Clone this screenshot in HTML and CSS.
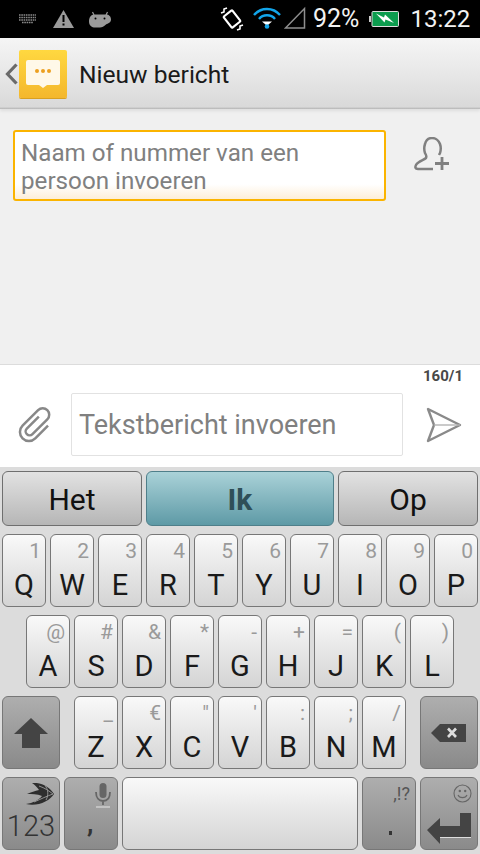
FILE: index.html
```html
<!DOCTYPE html>
<html lang="nl">
<head>
  <meta charset="UTF-8" />
  <meta name="viewport" content="width=device-width, initial-scale=1.0"/>
  <title>Nieuw bericht</title>
  <link rel="stylesheet" href="styles.css">
</head>
<body>
  <div class="statusbar">
    <svg class="st-kbd" width="19" height="10" viewBox="0 0 19 10"><path d="M1 1h17M1 3.500h17M1 6h17M4 8.500h11" stroke="#8a8a8a" stroke-width="1.600" stroke-dasharray="1.600 .7"/></svg>
    <svg class="st-warn" width="21" height="18" viewBox="0 0 21 18"><path d="M10.500 0L21 18H0Z" fill="#9a9a9a"/><path d="M9.500 5h2v7h-2zM9.500 13.500h2v2h-2z" fill="#000"/></svg>
    <svg class="st-droid" width="22" height="17" viewBox="0 0 22 17"><path d="M5 4L3.500 1M17 4l1.500-3" stroke="#9a9a9a" stroke-width="1.200"/><path d="M5 3.500h12c3 0 5 2 5 5s-3 4-5 5c-2 2-4 3-6 3H6c-3 0-6-2-6-6 0-4 2-7 5-7Z" fill="#9a9a9a"/><circle cx="6.500" cy="7.500" r="1" fill="#000"/><circle cx="15.500" cy="7.500" r="1" fill="#000"/></svg>
    <svg class="st-rot" width="24" height="24" viewBox="0 0 24 24"><g fill="none" stroke="#fff"><rect x="6.500" y="5" width="11" height="14" rx="1" transform="rotate(-38 12 12)" stroke-width="2.200"/><path d="M1 6l3-1 0-3 3-1M23 18l-3 1 0 3-3 1" stroke-width="1.600"/></g></svg>
    <svg class="st-wifi" width="28" height="23" viewBox="0 0 28 23"><g fill="none" stroke="#12a5ea" stroke-width="2.400"><path d="M1 9C8 1 20 1 27 9"/><path d="M6 13C10 8 18 8 22 13"/></g><path d="M9 15.500h10l-4 3.500h-2z" fill="#fff"/><circle cx="14" cy="20.500" r="2.300" fill="#12a5ea"/></svg>
    <svg class="st-signal" width="22" height="23" viewBox="0 0 22 23"><path d="M20.500 2.500V22H1.500Z" fill="none" stroke="#8e8e8e" stroke-width="1.500"/></svg>
    <span class="st-text st-pct">92%</span>
    <svg class="st-batt" width="30" height="16" viewBox="0 0 30 16"><rect x="0" y="5" width="2" height="6" fill="#ccc"/><rect x="3" y="0.500" width="26.500" height="15" rx="1" fill="#0c9c4e" stroke="#ddd"/><path d="M7 2.500l8 4 1-3 9 8.500-8.500-3.500-1 3Z" fill="#fff"/></svg>
    <span class="st-text st-time">13:22</span>
  </div>

  <div class="actionbar">
    <svg class="back" width="13" height="22" viewBox="0 0 13 22"><path d="M11.500 1.500L2.500 11l9 9.500" fill="none" stroke="#6a6a6a" stroke-width="3.200"/></svg>
    <div class="app-icon">
      <svg width="34" height="28" viewBox="0 0 34 28"><path d="M2 0h30a2 2 0 0 1 2 2v21a2 2 0 0 1-2 2H21l-4 3-4-3H2a2 2 0 0 1-2-2V2a2 2 0 0 1 2-2Z" fill="#fff8e8"/><circle cx="11" cy="11" r="2" fill="#eca020"/><circle cx="17" cy="11" r="2" fill="#eca020"/><circle cx="23" cy="11" r="2" fill="#eca020"/></svg>
    </div>
    <span class="title">Nieuw bericht</span>
  </div>

  <div class="recipient">
    <div class="to-field">Naam of nummer van een persoon invoeren</div>
    <svg class="add-person" width="36" height="34" viewBox="0 0 36 34"><path d="M19 32H4c-3 0-3-2-2-4 2-4 8-5 10-7 1-2 0-3-1-5-1-3-1-6 0-9 1-4 4-6 7-6 4 0 7 3 8 6 1 3 1 6 0 9l-1 2" fill="none" stroke="#808080" stroke-width="2.500"/><path d="M28 20v13M21 26.500h14" stroke="#808080" stroke-width="2.800"/></svg>
  </div>

  <div class="compose">
    <div class="counter">160/1</div>
    <div class="compose-row">
      <svg class="clip" width="38" height="38" viewBox="0 0 38 38"><path d="M15 11V28a4 4 0 0 0 8 0V7a6.500 6.500 0 0 0-13 0V29a9 9 0 0 0 18 0V11" transform="rotate(45 19 19)" fill="none" stroke="#888" stroke-width="2.500"/></svg>
      <div class="msg-field">Tekstbericht invoeren</div>
      <svg class="send" width="36" height="36" viewBox="0 0 36 36"><path d="M2 2L34 18 2 34 8 18Z" fill="none" stroke="#8a8a8a" stroke-width="2.400" stroke-linejoin="round"/><path d="M8 18H34" stroke="#b4b4b4" stroke-width="1.400"/></svg>
    </div>
  </div>

  <div class="keyboard">
    <div class="row suggestions">
      <div class="sug">Het</div>
      <div class="sug sug-main">Ik</div>
      <div class="sug">Op</div>
    </div>
    <div class="row">
      <div class="key"><span class="hint">1</span><span class="main">Q</span></div>
      <div class="key"><span class="hint">2</span><span class="main">W</span></div>
      <div class="key"><span class="hint">3</span><span class="main">E</span></div>
      <div class="key"><span class="hint">4</span><span class="main">R</span></div>
      <div class="key"><span class="hint">5</span><span class="main">T</span></div>
      <div class="key"><span class="hint">6</span><span class="main">Y</span></div>
      <div class="key"><span class="hint">7</span><span class="main">U</span></div>
      <div class="key"><span class="hint">8</span><span class="main">I</span></div>
      <div class="key"><span class="hint">9</span><span class="main">O</span></div>
      <div class="key"><span class="hint">0</span><span class="main">P</span></div>
    </div>
    <div class="row row-home">
      <div class="key"><span class="hint">@</span><span class="main">A</span></div>
      <div class="key"><span class="hint">#</span><span class="main">S</span></div>
      <div class="key"><span class="hint">&amp;</span><span class="main">D</span></div>
      <div class="key"><span class="hint">*</span><span class="main">F</span></div>
      <div class="key"><span class="hint">-</span><span class="main">G</span></div>
      <div class="key"><span class="hint">+</span><span class="main">H</span></div>
      <div class="key"><span class="hint">=</span><span class="main">J</span></div>
      <div class="key"><span class="hint">(</span><span class="main">K</span></div>
      <div class="key"><span class="hint">)</span><span class="main">L</span></div>
    </div>
    <div class="row">
      <div class="key key-dark key-wide key-icon">
        <svg width="34" height="30" viewBox="0 0 34 30"><path d="M17 0L34 16H26V30H8V16H0Z" fill="#444"/></svg>
      </div>
      <div class="key key-gap"><span class="hint">_</span><span class="main">Z</span></div>
      <div class="key"><span class="hint">€</span><span class="main">X</span></div>
      <div class="key"><span class="hint">"</span><span class="main">C</span></div>
      <div class="key"><span class="hint">'</span><span class="main">V</span></div>
      <div class="key"><span class="hint">:</span><span class="main">B</span></div>
      <div class="key"><span class="hint">;</span><span class="main">N</span></div>
      <div class="key"><span class="hint">/</span><span class="main">M</span></div>
      <div class="key key-dark key-wide key-icon key-del">
        <svg width="36" height="18" viewBox="0 0 36 18"><path d="M9 0H35V18H9L0 9Z" fill="#444"/><path d="M17 4.500l8 8.500M25 4.500l-8 8.500" stroke="#ddd" stroke-width="2.600"/></svg>
      </div>
    </div>
    <div class="row">
      <div class="key key-dark key-wide key-123">
        <svg class="swift" width="29" height="22" viewBox="0 0 29 22"><path d="M7 0C16-1 25 4 29 11 25 18 12 24 1 21 8 20 14 17 17 13 12 11 7 11 2 11 6 9 10 8 14 7 12 4 10 2 7 0Z" fill="#2e2e2e"/><path d="M14 3C20 5 24 8 28 11 22 13 16 16 9 19M20 2.500C23 6 24 12 21 17" fill="none" stroke="#9c9c9c" stroke-width=".9"/></svg>
        <span class="num">123</span>
      </div>
      <div class="key key-dark key-comma">
        <svg class="mic" width="16" height="25" viewBox="0 0 16 25"><rect x="4.500" y="0" width="7" height="15" rx="3.500" fill="#666"/><path d="M1 9c0 6 3 9 7 9s7-3 7-9M8 18v4" fill="none" stroke="#666" stroke-width="1.800"/><path d="M1 24h14" stroke="#ccc" stroke-width="1.600"/></svg>
        <span class="comma">,</span>
      </div>
      <div class="key key-space"></div>
      <div class="key key-dark key-period">
        <span class="hint">,!?</span>
        <span class="dot"></span>
      </div>
      <div class="key key-dark key-wide key-enter">
        <svg class="smiley" width="19" height="19" viewBox="0 0 19 19"><g fill="none" stroke="#666" stroke-width="1.100"><circle cx="9.500" cy="9.500" r="8.500"/><path d="M5 11c1.500 3.500 7.500 3.500 9 0"/></g><circle cx="6.800" cy="7" r="1.200" fill="#666"/><circle cx="12.200" cy="7" r="1.200" fill="#666"/></svg>
        <svg class="enter" width="44" height="31" viewBox="0 0 44 31"><path d="M33 0H44V24H13V31L0 17 13 5V13H33Z" fill="#444"/><path d="M13 24.500H44" stroke="#ddd" stroke-width="1"/></svg>
      </div>
    </div>
  </div>
</body>
</html>
```

FILE: styles.css
```css
* { box-sizing: border-box; }
html, body { margin: 0; padding: 0; }
body { width: 480px; height: 854px; display: flex; flex-direction: column; overflow: hidden; font-family: Roboto, sans-serif; background: #f0f0f0; }

.statusbar { height: 38px; flex: none; background: #000; display: flex; align-items: center; }
.statusbar svg { flex: none; display: block; }
.st-kbd { margin-left: 18px; }
.st-warn { margin-left: 16px; }
.st-droid { margin-left: 15px; }
.st-rot { margin-left: 109px; }
.st-wifi { margin-left: 9px; margin-top: -3px; }
.st-signal { margin-left: 3px; margin-top: -3px; }
.st-text { color: #f2f2f2; font-size: 24px; line-height: 40px; }
.st-pct { margin-left: 7px; font-size: 25px; }
.st-batt { margin-left: 10px; margin-top: -1px; }
.st-time { margin-left: 11px; }

.actionbar { height: 71px; flex: none; display: flex; align-items: center; background: linear-gradient(#f5f5f5, #e9e9e9 45%, #d9d9d9 97%, #b4b4b4); box-shadow: 0 2px 3px rgba(0,0,0,.08); }
.back { margin-left: 5px; flex: none; }
.app-icon { width: 48px; height: 48px; margin-left: 1px; flex: none; border-radius: 2px; background: linear-gradient(#ffd840, #f4b72c); display: flex; align-items: center; justify-content: center; box-shadow: 0 1px 0 #d9a020; }
.title { margin-left: 12px; padding-top: 2px; font-size: 24.6px; color: #1a1a1a; }

.recipient { flex: 1; display: flex; align-items: flex-start; padding: 21px 0 0 13px; }
.to-field { width: 373px; height: 71px; padding: 7px 6px; border: 2px solid #fbb400; border-radius: 3px; background: linear-gradient(#fff 78%, #fdeed8); color: #808080; font-size: 24.2px; line-height: 28px; }
.add-person { margin: 7px 0 0 28px; flex: none; }

.compose { height: 103px; flex: none; background: #fff; border-top: 1px solid #dcdcdc; }
.counter { height: 28px; padding-right: 17px; text-align: right; font-size: 15px; font-weight: 700; line-height: 22px; color: #484848; }
.compose-row { display: flex; align-items: center; }
.clip { margin-left: 17px; flex: none; }
.msg-field { width: 332px; height: 63px; margin-left: 16px; padding: 1px 0 0 7px; border: 1px solid #e2e2e2; border-radius: 2px; color: #808080; font-size: 27px; line-height: 61px; }
.send { margin-left: 23px; flex: none; }

.keyboard { height: 387px; flex: none; padding: 4px 2px; display: flex; flex-direction: column; gap: 8px; background: #dcdcdc; }
.row { display: flex; gap: 4px; height: 73px; }
.suggestions { height: 55px; }
.row-home { padding-left: 24px; }

.sug { width: 140px; padding-top: 2px; border: 1px solid #6f6f6f; border-radius: 6px; background: linear-gradient(#e2e2e2, #b6b6b6); color: #111; font-size: 30px; line-height: 51px; text-align: center; }
.sug-main { width: 188px; border-color: #4f7f8a; background: linear-gradient(#aad2d8, #5e9aa6); color: #2f4f58; font-weight: 700; }

.key { width: 44px; border: 1px solid #777; border-radius: 6px; background: linear-gradient(#f9f9f9, #e6e6e6 50%, #d4d4d4); display: flex; flex-direction: column; }
.hint { height: 32px; padding-right: 4px; text-align: right; font-size: 21px; line-height: 33px; color: #9a9a9a; }
.main { text-align: center; font-size: 29px; line-height: 36px; color: #1a1a1a; }

.key-dark { background: linear-gradient(#aeaeae, #8a8a8a); }
.key-wide { width: 58px; }
.key-gap { margin-left: 10px; }
.key-del { margin-left: 10px; }
.key-icon { align-items: center; justify-content: center; }
.key-space { width: 236px; }

.key-123 { align-items: flex-end; }
.swift { margin: 5px 5px 0 0; flex: none; }
.num { width: 100%; text-align: center; font-size: 29px; font-weight: 300; line-height: 38px; margin-top: 2px; color: #333; }
.key-comma { width: 54px; align-items: flex-end; }
.mic { margin: 5px 6px 0 0; flex: none; }
.comma { width: 100%; padding-left: 22px; font-size: 26px; font-weight: 700; line-height: 30px; color: #333; }
.key-period { width: 54px; }
.key-period .hint { color: #555; font-size: 18px; padding-right: 5px; line-height: 31px; height: 34px; }
.dot { width: 3px; height: 4px; margin: 19px 0 0 26px; background: #333; }
.key-enter { align-items: flex-end; }
.smiley { margin: 6px 5px 0 0; flex: none; }
.enter { margin: 10px 6px 0 0; flex: none; }
```
